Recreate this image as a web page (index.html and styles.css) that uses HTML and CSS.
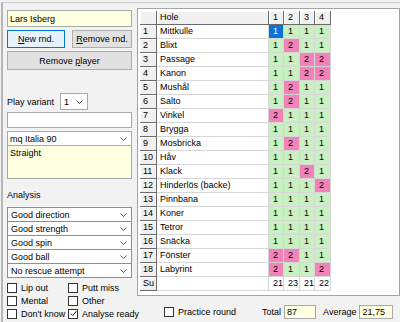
FILE: index.html
```html
<!DOCTYPE html>
<html lang="sv">
  <head>
    <meta charset="UTF-8" />
    <title>Round - Lars Isberg</title>
    <link rel="stylesheet" href="styles.css">
  </head>
  <body>
    <div class="app">
      <div class="left">
        <div class="field yellow name">Lars Isberg</div>
        <div class="btn-row">
          <button class="btn btn-default"><u>N</u>ew rnd.</button>
          <button class="btn btn-alt"><u>R</u>emove rnd.</button>
        </div>
        <button class="btn btn-wide">Remove <u>p</u>layer</button>

        <div class="variant">
          <span class="label">Play variant</span>
          <div class="combo combo-small">
            <span>1</span>
            <svg width="7" height="4" viewBox="0 0 7 4"><path d="M0.5 0.5 L3.5 3.5 L6.5 0.5" fill="none" stroke="#555"/></svg>
          </div>
        </div>
        <div class="field empty"></div>
        <div class="combo course">
          <span>mq Italia 90</span>
          <svg width="7" height="4" viewBox="0 0 7 4"><path d="M0.5 0.5 L3.5 3.5 L6.5 0.5" fill="none" stroke="#555"/></svg>
        </div>
        <div class="field yellow note">Straight</div>

        <div class="section-label">Analysis</div>
        <div class="combo-list">
          <div class="combo"><span>Good direction</span><svg width="7" height="4" viewBox="0 0 7 4"><path d="M0.5 0.5 L3.5 3.5 L6.5 0.5" fill="none" stroke="#555"/></svg></div>
          <div class="combo"><span>Good strength</span><svg width="7" height="4" viewBox="0 0 7 4"><path d="M0.5 0.5 L3.5 3.5 L6.5 0.5" fill="none" stroke="#555"/></svg></div>
          <div class="combo"><span>Good spin</span><svg width="7" height="4" viewBox="0 0 7 4"><path d="M0.5 0.5 L3.5 3.5 L6.5 0.5" fill="none" stroke="#555"/></svg></div>
          <div class="combo"><span>Good ball</span><svg width="7" height="4" viewBox="0 0 7 4"><path d="M0.5 0.5 L3.5 3.5 L6.5 0.5" fill="none" stroke="#555"/></svg></div>
          <div class="combo"><span>No rescue attempt</span><svg width="7" height="4" viewBox="0 0 7 4"><path d="M0.5 0.5 L3.5 3.5 L6.5 0.5" fill="none" stroke="#555"/></svg></div>
        </div>

        <div class="checks">
          <label class="check"><span class="box"></span>Lip out</label>
          <label class="check"><span class="box"></span>Putt miss</label>
          <label class="check"><span class="box"></span>Mental</label>
          <label class="check"><span class="box"></span>Other</label>
          <label class="check"><span class="box"></span>Don't know</label>
          <label class="check"><span class="box"><svg width="7" height="7" viewBox="0 0 7 7"><path d="M0.8 3.6 L2.8 5.6 L6.3 1.2" fill="none" stroke="#222" stroke-width="1"/></svg></span>Analyse ready</label>
        </div>
      </div>

      <div class="right">
        <div class="grid-box">
          <div class="grid" id="grid"></div>
        </div>
        <div class="footer">
          <span class="box"></span>
          <span>Practice round</span>
          <span class="total-label">Total</span>
          <span class="value total" id="total"></span>
          <span class="avg-label">Average</span>
          <span class="value avg" id="average"></span>
        </div>
      </div>
    </div>

    <script>
      const holes = [
        ["Mittkulle", [1, 1, 1, 1]],
        ["Blixt", [1, 2, 1, 1]],
        ["Passage", [1, 1, 2, 2]],
        ["Kanon", [1, 1, 2, 2]],
        ["Mushål", [1, 2, 1, 1]],
        ["Salto", [1, 2, 1, 1]],
        ["Vinkel", [2, 1, 1, 1]],
        ["Brygga", [1, 1, 1, 1]],
        ["Mosbricka", [1, 2, 1, 1]],
        ["Håv", [1, 1, 1, 1]],
        ["Klack", [1, 1, 2, 1]],
        ["Hinderlös (backe)", [1, 1, 1, 2]],
        ["Pinnbana", [1, 1, 1, 1]],
        ["Koner", [1, 1, 1, 1]],
        ["Tetror", [1, 1, 1, 1]],
        ["Snäcka", [1, 1, 1, 1]],
        ["Fönster", [2, 2, 1, 1]],
        ["Labyrint", [2, 1, 1, 2]],
      ];

      const sums = [0, 0, 0, 0];
      let html = '<div class="c h"></div><div class="c h">Hole</div>';
      [1, 2, 3, 4].forEach((n) => {
        html += `<div class="c h num">${n}</div>`;
      });

      holes.forEach(([name, scores], i) => {
        html += `<div class="c h">${i + 1}</div><div class="c">${name}</div>`;
        scores.forEach((s, j) => {
          sums[j] += s;
          let cls = s === 2 ? "p" : "g";
          if (i === 0 && j === 0) cls = "sel"; // current cell
          html += `<div class="c num ${cls}">${s}</div>`;
        });
      });

      html += '<div class="c h">Su</div><div class="c"></div>';
      sums.forEach((s) => {
        html += `<div class="c num">${s}</div>`;
      });
      document.getElementById("grid").innerHTML = html;

      const total = sums.reduce((a, b) => a + b, 0);
      document.getElementById("total").textContent = total;
      document.getElementById("average").textContent = (total / sums.length)
        .toFixed(2)
        .replace(".", ",");
    </script>
  </body>
</html>
```

FILE: styles.css
```css
body {
  margin: 0;
  background-color: #f2f2f2;
  font-family: "Liberation Sans", Arial, sans-serif;
  font-size: 9px;
  color: #000;
  overflow: hidden;
}
.app {
  display: flex;
  margin: 2px 0 0 1px;
  height: 320px;
  box-sizing: border-box;
  border-top: 1px solid #cbcbcb;
  border-left: 2px solid #b6b6b6;
}

/* left panel */
.left {
  width: 125px;
  flex-shrink: 0;
  padding: 7px 0 0 4px;
  display: flex;
  flex-direction: column;
}
.field {
  box-sizing: border-box;
  border: 1px solid #a8a8a8;
  background-color: #fff;
  padding: 0 2px;
  display: flex;
  align-items: center;
}
.yellow {
  background-color: #ffffe1;
}
.name {
  height: 17px;
}
.btn-row {
  display: flex;
  gap: 7px;
  margin-top: 3px;
}
.btn {
  box-sizing: border-box;
  height: 18px;
  padding: 0;
  font: inherit;
  color: #000;
  background-color: #e1e1e1;
  border: 1px solid #adadad;
}
.btn-default {
  width: 58px;
  background-color: #e5f1fb;
  border-color: #0078d7;
}
.btn-alt {
  width: 60px;
}
.btn-wide {
  width: 100%;
  height: 19px;
  margin-top: 3px;
}
.variant {
  display: flex;
  align-items: center;
  height: 17px;
  margin-top: 23px;
}
.variant .label {
  width: 53px;
}
.combo {
  box-sizing: border-box;
  height: 15px;
  border: 1px solid #8e8e8e;
  background-color: #fff;
  padding: 0 4px 0 3px;
  display: flex;
  align-items: center;
  justify-content: space-between;
}
.combo-small {
  width: 28px;
  height: 17px;
  border-color: #a8a8a8;
}
.empty {
  height: 16px;
  margin-top: 2px;
}
.course {
  margin-top: 3px;
  border-color: #a8a8a8;
  padding-left: 2px;
}
.note {
  height: 34px;
  margin-top: -1px;
  align-items: flex-start;
  padding-top: 2px;
}
.section-label {
  height: 11px;
  line-height: 11px;
  margin-top: 11px;
}
.combo-list {
  display: flex;
  flex-direction: column;
  margin-top: 6px;
}
.combo-list .combo + .combo {
  margin-top: -1px;
}
.checks {
  display: grid;
  grid-template-columns: 61px auto;
  grid-auto-rows: 13px;
  margin-top: 3px;
}
.check {
  display: flex;
  align-items: center;
  gap: 4px;
  white-space: nowrap;
}
.box {
  box-sizing: border-box;
  width: 10px;
  height: 10px;
  flex-shrink: 0;
  border: 1px solid #333;
  background-color: #fff;
  display: flex;
  align-items: center;
  justify-content: center;
}

/* score grid */
.right {
  width: 263px;
  margin: 5px 0 0 5px;
  display: flex;
  flex-direction: column;
}
.grid-box {
  box-sizing: border-box;
  height: 288px;
  background-color: #fff;
  border: 1px solid #a4a4a4;
  padding: 2px 0 0 2px;
}
.grid {
  display: grid;
  grid-template-columns: 17px 112px 15px 16px 15px 16px;
  grid-auto-rows: 14px;
  width: 191px;
}
.c {
  box-sizing: border-box;
  border-right: 1px solid #d6d6d6;
  border-bottom: 1px solid #d6d6d6;
  padding-left: 3px;
  line-height: 13px;
  white-space: nowrap;
  overflow: hidden;
}
.h {
  background-color: #f0f0f0;
  border-right-color: #6b6b6b;
  border-bottom-color: #6b6b6b;
  box-shadow: inset 1px 1px #fff;
}
.num {
  padding-left: 4px;
}
.g {
  background-color: #c8f0c0;
}
.p {
  background-color: #f283b9;
}
.sel {
  background-color: #0a72d8;
  color: #fff;
}

.footer {
  display: flex;
  align-items: center;
  height: 13px;
  margin-top: 9px;
  padding-left: 27px;
}
.footer .box {
  margin-right: 4px;
}
.total-label {
  margin-left: 26px;
}
.value {
  box-sizing: border-box;
  height: 14px;
  line-height: 12px;
  margin-left: 3px;
  padding-left: 2px;
  border: 1px solid #a8a8a8;
  background-color: #ffffe1;
}
.total {
  width: 32px;
}
.avg-label {
  margin-left: 7px;
}
.avg {
  width: 34px;
}
```
